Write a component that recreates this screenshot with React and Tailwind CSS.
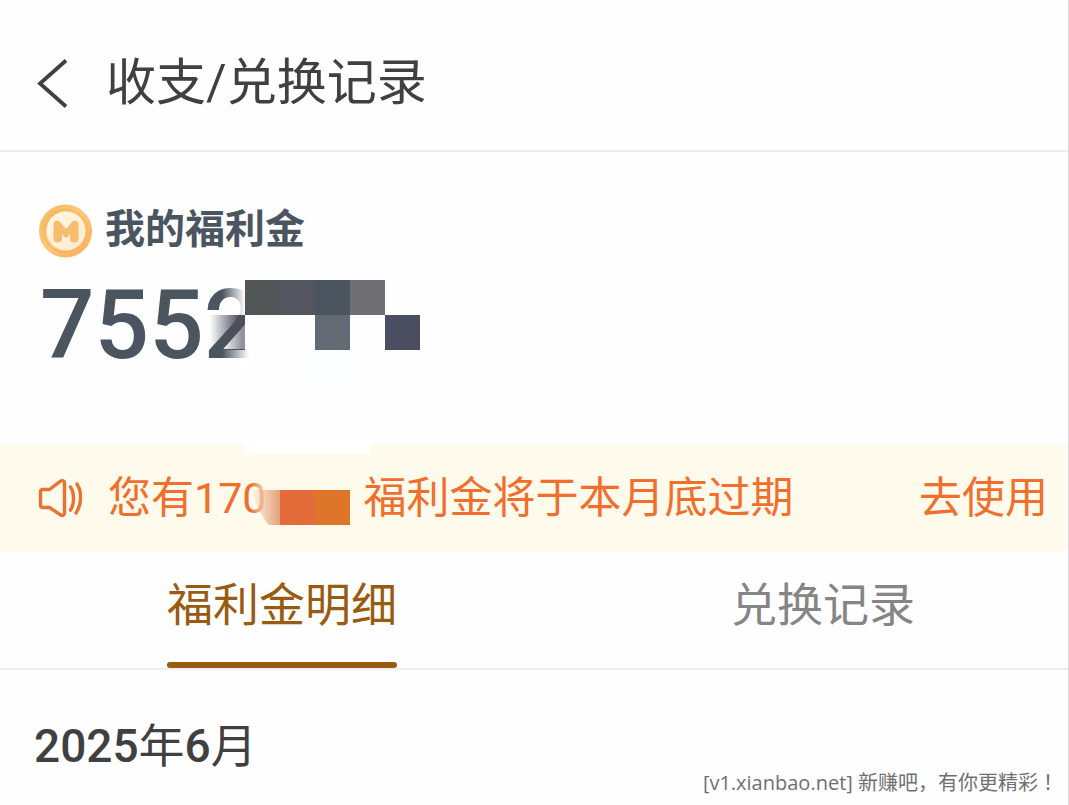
import React from "react";

function CoinIcon() {
  return (
    <svg className="size-14 shrink-0" viewBox="0 0 56 56" aria-hidden="true">
      <defs>
        <linearGradient id="coinRim" x1="0" y1="0" x2="1" y2="1">
          <stop offset="0" stopColor="#f8b957" />
          <stop offset="0.5" stopColor="#fdc880" />
          <stop offset="1" stopColor="#f7a94f" />
        </linearGradient>
        <linearGradient id="coinFace" x1="0" y1="0" x2="1" y2="1">
          <stop offset="0" stopColor="#fff8e8" />
          <stop offset="1" stopColor="#fdebcb" />
        </linearGradient>
      </defs>
      <circle cx="27.5" cy="29" r="26.5" fill="url(#coinRim)" />
      <circle cx="27.500" cy="29" r="21.5" fill="none" stroke="#fbb45c" strokeWidth="1.5" />
      <circle cx="28" cy="29" r="19.5" fill="url(#coinFace)" />
      <path
        d="M15.500 37V23Q15.500 18.500 19 18.500Q21 18.500 22.500 20.500L28 27L33.500 20.500Q35 18.500 37 18.500Q40.500 18.500 40.500 23V37Q40.500 40.500 36.500 40.500Q32 40.500 32 37V32L29.500 35Q28 36.500 26.500 35L24 32V37Q24 40.500 19.500 40.500Q15.500 40.500 15.500 37Z"
        fill="#f8bd6c"
      />
    </svg>
  );
}

function SpeakerIcon() {
  return (
    <svg
      className="h-10 w-11 shrink-0"
      viewBox="0 0 44 40"
      fill="none"
      stroke="#e8722f"
      strokeWidth="3.4"
      strokeLinejoin="round"
      strokeLinecap="round"
      aria-hidden="true"
    >
      <path d="M5 11.500H11.500L22.500 3.200C24.500 2 26.500 2.700 26.500 5V35C26.500 37.300 24.500 38 22.500 36.800L11.500 29.500H5C3 29.500 2.500 28.500 2.500 27V14C2.500 12.500 3 11.500 5 11.500Z" />
      <path d="M32.500 9C36.500 15 36.500 26 32.500 32" />
      <path d="M39 6C44 14 44 26 38 35" />
    </svg>
  );
}

function BalanceMask() {
  return (
    <svg className="absolute left-40 top-0 h-44 w-56" viewBox="0 0 224 176" aria-hidden="true">
      <defs>
        <linearGradient id="fadeWhite">
          <stop offset="0" stopColor="#fff" stopOpacity="0" />
          <stop offset="1" stopColor="#fff" />
        </linearGradient>
        <linearGradient id="fadeDark">
          <stop offset="0" stopColor="#4b4e5b" stopOpacity="0" />
          <stop offset="0.85" stopColor="#4b4e5b" />
        </linearGradient>
      </defs>
      <rect x="24" y="2" width="23" height="35" fill="url(#fadeWhite)" />
      <rect x="24" y="72" width="27" height="14" fill="url(#fadeWhite)" />
      <rect x="47" y="2" width="24" height="70" fill="#fefefe" />
      <rect x="51" y="72" width="20" height="20" fill="#fefefe" />
      <path d="M12 37H47V46L24 72H12Z" fill="url(#fadeDark)" />
      <path d="M24 72L47 46V72Z" fill="url(#fadeDark)" fillOpacity="0.6" />
      <rect x="47" y="2" width="35" height="35" fill="#515556" />
      <rect x="82" y="2" width="35" height="35" fill="#54565f" />
      <rect x="117" y="2" width="35" height="35" fill="#4b5560" />
      <rect x="152" y="2" width="35" height="35" fill="#707074" />
      <rect x="117" y="37" width="35" height="35" fill="#636a74" />
      <rect x="187" y="37" width="35" height="35" fill="#4b4e61" />
      <rect x="117" y="72" width="35" height="35" fill="#fafeff" />
      <rect x="47" y="160" width="125" height="16" rx="2" fill="#fff" />
    </svg>
  );
}

function NoticeMask() {
  return (
    <svg className="-ml-4 h-[54px] w-[113px] shrink-0" viewBox="0 0 113 54" aria-hidden="true">
      <defs>
        <linearGradient id="fadeCream">
          <stop offset="0" stopColor="#fefaec" stopOpacity="0" />
          <stop offset="1" stopColor="#fefaec" />
        </linearGradient>
        <linearGradient id="fadeOrange">
          <stop offset="0" stopColor="#e79a70" stopOpacity="0" />
          <stop offset="1" stopColor="#e3a27c" />
        </linearGradient>
      </defs>
      <rect width="18" height="54" fill="url(#fadeCream)" />
      <path d="M0 19H29V54H18Q10 46 0 19Z" fill="url(#fadeOrange)" />
      <rect x="29" y="19" width="35" height="35" fill="#e46c3b" />
      <rect x="64" y="19" width="35" height="35" fill="#df752a" />
    </svg>
  );
}

export default function App() {
  return (
    <main className="flex min-h-screen flex-col border-r border-[#d9d9de] bg-[#fefefe] font-['Roboto','Noto_Sans_CJK_SC',sans-serif] text-[#404040]">
      <header className="flex h-[152px] items-start border-b-2 border-[#ececec] pt-[53px] pl-9">
        <button type="button" aria-label="返回" className="mt-[6px] mr-[38px] shrink-0">
          <svg className="h-[50px] w-8" viewBox="0 0 32 50" fill="none" stroke="#404040" strokeWidth="3.8" aria-hidden="true">
            <path d="M30 1.500L4 24.500L30 47.500" />
          </svg>
        </button>
        <h1 className="text-[50px] leading-[60px] whitespace-nowrap">收支/兑换记录</h1>
      </header>

      <section className="h-[293px] pt-[50px] pl-[38px] text-[#4b5560]">
        <div className="flex h-14 items-center gap-[11px]">
          <CoinIcon />
          <h2 className="text-[40px] leading-none font-bold">我的福利金</h2>
        </div>
        <div className="relative mt-5">
          <p className="pl-[2px] text-[96px] leading-[94px] font-medium">7552</p>
          <BalanceMask />
        </div>
      </section>

      <section className="flex h-[106px] items-center bg-[#fefaec] pr-5 pl-[38px] text-[43px] whitespace-nowrap text-[#f06f2c]">
        <SpeakerIcon />
        <p className="ml-[26px] flex items-center">
          <span>您有170</span>
          <NoticeMask />
          <span>福利金将于本月底过期</span>
        </p>
        <a href="#use" className="ml-auto">去使用</a>
      </section>

      <nav className="grid h-[119px] grid-cols-2 border-b-2 border-[#eeeeee] text-[46px] leading-[60px]">
        <button type="button" aria-current="page" className="flex flex-col items-center justify-between pt-6 pl-[30px] text-[#985b10]">
          <span>福利金明细</span>
          <span className="h-[6px] w-[230px] rounded-full bg-[#985b10]" />
        </button>
        <button type="button" className="flex justify-center pt-6 pl-11 text-[#858585]">兑换记录</button>
      </nav>

      <section className="flex flex-1 flex-col justify-between pt-[46px]">
        <h2 className="pl-[34px] text-[46px] leading-[60px]">
          <span className="font-medium">2025</span>年<span className="font-medium">6</span>月
        </h2>
        <footer className="-mt-2 pr-[10px] pb-2 text-right font-['Open_Sans','Noto_Sans_CJK_SC',sans-serif] text-[20px] leading-[28px] text-[#707070]">
          [v1.xianbao.net] 新赚吧，有你更精彩<span className="font-['Noto_Sans_CJK_TC',sans-serif]">！</span>
        </footer>
      </section>
    </main>
  );
}
